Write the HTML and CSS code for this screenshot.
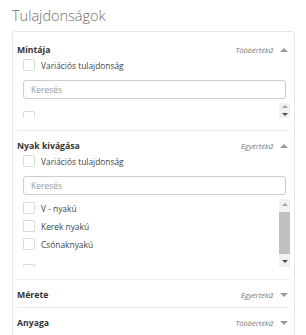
FILE: index.html
```html
<!DOCTYPE html>
<html lang="hu">
<head>
  <meta charset="UTF-8">
  <meta name="viewport" content="width=device-width, initial-scale=1.0">
  <title>Tulajdonságok</title>
  <link rel="stylesheet" href="styles.css">
</head>
<body>
  <h1 class="title">Tulajdonságok</h1>

  <div class="panel">
    <!-- Mintája -->
    <div class="prop open">
      <div class="prop-head">
        <span class="prop-name">Mintája</span>
        <span class="prop-meta"><em>Többértékű</em><span class="caret up"></span></span>
      </div>
      <div class="prop-body">
        <label class="check-row"><span class="box"></span>Variációs tulajdonság</label>
        <input class="search" type="text" placeholder="Keresés">
        <div class="list-wrap short">
          <div class="list">
            <div class="opt peek"><span class="box"></span></div>
          </div>
          <div class="scrollbar">
            <span class="arrow up off"></span>
            <span class="arrow down"></span>
          </div>
        </div>
      </div>
    </div>

    <!-- Nyak kivágása -->
    <div class="prop open">
      <div class="prop-head">
        <span class="prop-name">Nyak kivágása</span>
        <span class="prop-meta"><em>Egyértékű</em><span class="caret up"></span></span>
      </div>
      <div class="prop-body">
        <label class="check-row"><span class="box"></span>Variációs tulajdonság</label>
        <input class="search" type="text" placeholder="Keresés">
        <div class="list-wrap tall">
          <div class="list">
            <div class="opt"><span class="box"></span>V - nyakú</div>
            <div class="opt"><span class="box"></span>Kerek nyakú</div>
            <div class="opt"><span class="box"></span>Csónaknyakú</div>
            <div class="opt peek"><span class="box"></span></div>
          </div>
          <div class="scrollbar">
            <span class="arrow up off"></span>
            <span class="thumb"></span>
            <span class="arrow down"></span>
          </div>
        </div>
      </div>
    </div>

    <!-- collapsed -->
    <div class="prop">
      <div class="prop-head">
        <span class="prop-name">Mérete</span>
        <span class="prop-meta"><em>Egyértékű</em><span class="caret down"></span></span>
      </div>
    </div>

    <div class="prop">
      <div class="prop-head">
        <span class="prop-name">Anyaga</span>
        <span class="prop-meta"><em>Többértékű</em><span class="caret down"></span></span>
      </div>
    </div>
  </div>
</body>
</html>
```

FILE: styles.css
```css
body {
  margin: 0;
  padding: 0 12px;
  font-family: "Open Sans", "DejaVu Sans", sans-serif;
  color: #333;
  background: #fff;
}

.title {
  margin: 0;
  padding-top: 6px;
  height: 25px;
  font-size: 14.5px;
  line-height: 20px;
  font-weight: 300;
  color: #6f6f6f;
}

.panel {
  border: 1px solid #e6e6e6;
  border-radius: 3px;
  padding: 3px 4px 0 4px;
  width: 273px;
}

.prop {
  padding: 8px 0 5px;
  border-bottom: 1px solid #eee;
}

.prop.open {
  padding-bottom: 12px;
}

.prop-head {
  display: flex;
  justify-content: space-between;
  align-items: center;
  height: 14px;
}

.prop-name {
  font-size: 8.7px;
  font-weight: 700;
  color: #333;
}

.prop-meta {
  display: flex;
  align-items: center;
  gap: 7px;
  margin-right: 2px;
}

.prop-meta em {
  font-size: 7.5px;
  color: #777;
}

.caret {
  width: 0;
  height: 0;
  border-left: 4px solid transparent;
  border-right: 4px solid transparent;
}

.caret.up {
  border-bottom: 4px solid #999;
}

.caret.down {
  border-top: 4px solid #999;
}

.prop-body {
  padding-left: 6px;
}

.check-row {
  display: flex;
  align-items: center;
  height: 16px;
  font-size: 8.4px;
  color: #444;
}

.box {
  width: 10px;
  height: 10px;
  border: 1px solid #dcdcdc;
  border-radius: 1px;
  margin-right: 6px;
  flex-shrink: 0;
}

.search {
  display: block;
  box-sizing: border-box;
  width: 263px;
  height: 19px;
  margin: 7px 0 0;
  padding: 0 7px;
  border: 1px solid #c9ced4;
  border-radius: 3px;
  font-family: inherit;
  font-size: 8.5px;
  outline: none;
}

.search::placeholder {
  color: #999;
}

.list-wrap {
  display: flex;
  margin-top: 4px;
  overflow: hidden;
}

.list-wrap.short {
  height: 15px;
}

.list-wrap.tall {
  height: 68px;
}

.list {
  flex: 1;
}

.opt {
  display: flex;
  align-items: center;
  height: 18px;
  font-size: 8.4px;
  color: #444;
}

.opt .box {
  margin-right: 6px;
}

.short .opt.peek {
  margin-top: 5px;
}

.tall .opt.peek {
  margin-top: 8px;
}

.scrollbar {
  display: flex;
  flex-direction: column;
  justify-content: space-between;
  align-items: center;
  width: 11px;
  background: #f1f1f1;
  margin-left: 3px;
}

.arrow {
  width: 0;
  height: 0;
  margin: 4px 0;
  border-left: 3px solid transparent;
  border-right: 3px solid transparent;
}

.arrow.up {
  border-bottom: 3px solid #505050;
}

.arrow.up.off {
  border-bottom-color: #a3a3a3;
}

.arrow.down {
  border-top: 3px solid #505050;
}

.short .arrow {
  margin: 2px 0;
}

.thumb {
  width: 11px;
  flex: 1;
  background: #c1c1c1;
  margin: 2px 0;
}
```
